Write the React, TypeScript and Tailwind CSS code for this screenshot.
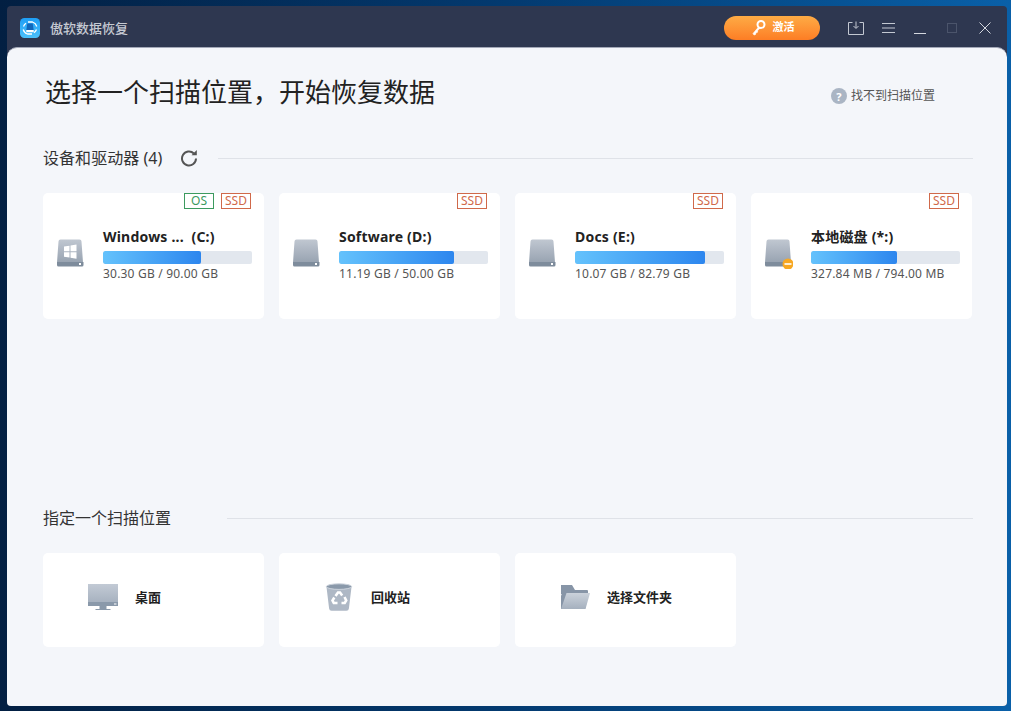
const FONT = '"Noto Sans","Noto Sans CJK SC",sans-serif';

function Hdd({ win, minus }: { win?: boolean; minus?: boolean }) {
  const id = win ? "ga" : minus ? "gb" : "gc";
  return (
    <svg width="30" height="32" viewBox="0 0 30 32" className="mb-[5px] shrink-0">
      <defs>
        <linearGradient id={id} x1="0" y1="0" x2="0" y2="1">
          <stop offset="0" stopColor="#c0c7d1" />
          <stop offset="1" stopColor="#98a3b1" />
        </linearGradient>
      </defs>
      <path d="M3.500 4.500a2 2 0 0 1 2-2h19a2 2 0 0 1 2 2l1.500 21H2z" fill={`url(#${id})`} />
      <path d="M2 25h26.500v3a1.500 1.500 0 0 1-1.500 1.500H3.500A1.500 1.500 0 0 1 2 28z" fill="#7e8c9c" />
      {!minus && <rect x="24" y="26" width="2" height="2" fill="#fff" />}
      {win && <path d="M9 9.600l5.500-.8v5.400H9zM15.500 8.600l6-1v6.600h-6zM9 15.200h5.500v5.400L9 19.800zM15.500 15.200h6v6.600l-6-1z" fill="#fff" />}
      {minus && (
        <g>
          <circle cx="25" cy="27" r="5.500" fill="#f7a823" />
          <rect x="21.500" y="26.200" width="7" height="1.600" fill="#fff" />
        </g>
      )}
    </svg>
  );
}

function Badge({ label, green }: { label: string; green?: boolean }) {
  return (
    <span
      className={`flex h-4 w-[30px] items-center justify-center border text-[12px] leading-none ${
        green ? "border-[#3c9a5f] text-[#3c9a5f]" : "border-[#d0694a] text-[#d0694a]"
      }`}
    >
      {label}
    </span>
  );
}

function Drive({
  name,
  size,
  pct,
  os,
  win,
  minus,
}: {
  name: string;
  size: string;
  pct: number;
  os?: boolean;
  win?: boolean;
  minus?: boolean;
}) {
  return (
    <div className="relative flex h-[126px] w-[221px] shrink-0 items-center rounded-[5px] bg-white pb-[2px] pl-[12px]">
      <div className="absolute right-[13px] top-0 flex gap-[7px]">
        {os && <Badge label="OS" green />}
        <Badge label="SSD" />
      </div>
      <Hdd win={win} minus={minus} />
      <div className="ml-[18px] w-[149px]">
        <div className="whitespace-pre text-[14px] font-bold leading-[20px] tracking-[0.2px] text-[#222]">{name}</div>
        <div className="mt-[4px] h-[13px] w-full overflow-hidden rounded-[2px] bg-[#e2e7ee]">
          <div
            className="h-full rounded-[2px] bg-gradient-to-r from-[#64c2fc] to-[#2d86ee]"
            style={{ width: `${pct}%` }}
          />
        </div>
        <div className="mt-[1px] text-[12px] leading-[18px] tracking-[0.2px] text-[#555]">{size}</div>
      </div>
    </div>
  );
}

function Place({ label, icon }: { label: string; icon: React.ReactNode }) {
  return (
    <div className="flex h-[94px] w-[221px] shrink-0 items-center rounded-[5px] bg-white pb-[6px] pl-[44px]">
      <div className="flex w-[32px] justify-center">{icon}</div>
      <span className="ml-[16px] text-[13px] font-bold leading-none text-[#222]">{label}</span>
    </div>
  );
}

function Monitor() {
  return (
    <svg width="32" height="28" viewBox="0 0 32 28">
      <defs>
        <linearGradient id="gm" x1="0" y1="0" x2="0" y2="1">
          <stop offset="0" stopColor="#c2cad5" />
          <stop offset="1" stopColor="#a7b2c0" />
        </linearGradient>
      </defs>
      <rect x="1" y="1" width="30" height="18" fill="url(#gm)" />
      <rect x="1" y="19" width="30" height="4" fill="#8a99aa" />
      <rect x="27" y="20.500" width="2.500" height="1" fill="#fff" />
      <rect x="12.500" y="23" width="7" height="3" fill="#8a99aa" />
      <rect x="8.500" y="26" width="15" height="1" fill="#8a99aa" />
    </svg>
  );
}

function Trash() {
  return (
    <svg width="28" height="30" viewBox="0 0 28 30">
      <path d="M1.500 5h25l-2.600 21.500a2.500 2.500 0 0 1-2.500 2.200H6.600a2.500 2.500 0 0 1-2.500-2.200z" fill="#aeb8c5" />
      <ellipse cx="14" cy="4.600" rx="12.600" ry="2.800" fill="#8a99aa" stroke="#cdd4dd" strokeWidth="1" />
      <g fill="none" stroke="#fff" strokeWidth="2.600">
        <path d="M10.500 14l2.500-3.500h2l2.200 3" />
        <path d="M19.500 15l1.700 3.500-1.500 2.500h-3.200" />
        <path d="M12.500 21H8.800l-1.300-2.500 1.800-3" />
      </g>
    </svg>
  );
}

function Folder() {
  return (
    <svg width="30" height="26" viewBox="0 0 30 26">
      <defs>
        <linearGradient id="gf" x1="0" y1="0" x2="0" y2="1">
          <stop offset="0" stopColor="#cbd2db" />
          <stop offset="1" stopColor="#a5b0be" />
        </linearGradient>
      </defs>
      <path d="M1 1h11l3 5h12a1 1 0 0 1 1 1v3H1z" fill="#8795a7" />
      <path d="M1 25V12l1-3h27l-4 16z" fill="#8795a7" />
      <path d="M6.500 9H30l-4.500 16H1z" fill="url(#gf)" />
    </svg>
  );
}

export default function App() {
  return (
    <div
      className="h-[711px] w-[1011px] overflow-hidden bg-gradient-to-r from-[#021f42] via-[#033a70] to-[#0a60a8] pb-[5px] pl-[7px] pr-[4px] pt-[6px]"
      style={{ fontFamily: FONT }}
    >
      <div className="flex h-[700px] w-[1000px] flex-col overflow-hidden rounded-[4px] bg-[#2e3750]">
        <header className="flex h-[41px] shrink-0 items-center pl-[13px] pt-[2px]">
          <svg width="20" height="20" viewBox="0 0 20 20" className="mt-[1px]">
            <defs>
              <linearGradient id="gl" x1="0" y1="0" x2="0" y2="1">
                <stop offset="0" stopColor="#1e9ef5" />
                <stop offset="1" stopColor="#4cc1fb" />
              </linearGradient>
            </defs>
            <rect width="20" height="20" rx="4.500" fill="url(#gl)" />
            <path d="M3.200 11.500a6.800 6.800 0 0 0 4.300 4.500H12M16.800 8.500A6.800 6.800 0 0 0 12.500 4H8M3.500 8.500a6.800 6.800 0 0 1 2.500-3.200M16.500 11.500a6.800 6.800 0 0 1-2.500 3.200" fill="none" stroke="#fff" strokeWidth="1.300" />
            <path d="M7.300 5.500h5.400l1 6.500H6.300z" fill="#1267bb" />
            <rect x="6.300" y="12" width="7.400" height="2.200" fill="#fff" />
          </svg>
          <span className="ml-[10px] mt-[2px] text-[13px] font-medium leading-none text-[#c6cad3]">傲软数据恢复</span>
          <button className="ml-[596px] flex h-[24px] w-[96px] items-center justify-center rounded-full bg-gradient-to-b from-[#fdab45] to-[#fd7d24] pl-[1px] text-[11px] font-bold text-white">
            <svg width="15" height="17" viewBox="0 0 15 17" className="mr-[7px]">
              <circle cx="10" cy="5.500" r="3.500" fill="none" stroke="#fff" strokeWidth="2" />
              <path d="M7.500 8L2 14.500l1 1.500 1.500-.5.500-1.800 1.500-.4.200-1.700 2.300-2.600" fill="#fff" stroke="#fff" strokeWidth="0.600" />
            </svg>
            激活
          </button>
          <svg width="16" height="14" viewBox="0 0 16 14" fill="none" stroke="#c3c8d2" strokeWidth="1" className="ml-[28px]">
            <path d="M4.500 1.500H.5v12h15v-12h-4" />
            <path d="M8 .5v6.500M5.500 5L8 7.500 10.500 5" />
          </svg>
          <svg width="13" height="12" viewBox="0 0 13 12" stroke="#c3c8d2" strokeWidth="1" className="ml-[18px]">
            <path d="M0 1.500h13M0 6h13M0 10.500h13" />
          </svg>
          <svg width="12" height="12" viewBox="0 0 12 12" stroke="#d5d8df" strokeWidth="1" className="ml-[19px] mt-[2px]">
            <path d="M0 10.500h12" />
          </svg>
          <svg width="10" height="10" viewBox="0 0 10 10" fill="none" stroke="#4b546b" strokeWidth="1" className="ml-[21px]">
            <rect x=".5" y=".5" width="9" height="9" />
          </svg>
          <svg width="12" height="12" viewBox="0 0 12 12" stroke="#d5d8df" strokeWidth="1" className="ml-[22px]">
            <path d="M.5.500l11 11M11.500.500l-11 11" />
          </svg>
        </header>

        <main className="flex-1 rounded-t-[10px] border-t border-[#a3a8b8] bg-[#f4f6fa] pl-[36px] pr-[35px]">
          <div className="flex h-[87px] items-start justify-between">
            <h1 className="ml-[2px] mt-[26px] text-[26px] font-normal leading-[36px] text-[#222]">
              {"选择一个扫描位置\uFF0C开始恢复数据"}
            </h1>
            <div className="mr-[37px] mt-[39px] flex items-center gap-[4px] text-[12px] leading-[18px] text-[#555]">
              <span className="flex h-4 w-4 items-center justify-center rounded-full bg-[#aab5c4] text-[11px] font-bold leading-none text-white">?</span>
              找不到扫描位置
            </div>
          </div>

          <div className="mt-[11px] flex h-[24px] items-center">
            <span className="whitespace-pre text-[16px] leading-none tracking-[0.05px] text-[#333]">设备和驱动器 (4)</span>
            <svg width="18" height="18" viewBox="0 0 18 18" fill="none" stroke="#555" strokeWidth="2" className="ml-[18px]">
              <path d="M16 9.500a7 7 0 1 1-2.100-5" />
              <path d="M16.800 1v5.300h-5.300z" fill="#555" stroke="none" />
            </svg>
            <div className="ml-[20px] mr-[-1px] h-px flex-1 bg-[#dfe2e8]" />
          </div>

          <div className="mt-[23px] flex gap-[15px]">
            <Drive name="Windows ...  (C:)" size="30.30 GB / 90.00 GB" pct={66} os win />
            <Drive name="Software (D:)" size="11.19 GB / 50.00 GB" pct={77} />
            <Drive name="Docs (E:)" size="10.07 GB / 82.79 GB" pct={87.5} />
            <Drive name="本地磁盘 (*:)" size="327.84 MB / 794.00 MB" pct={58} minus />
          </div>

          <div className="mt-[187px] flex h-[24px] items-center">
            <span className="text-[16px] leading-none text-[#333]">指定一个扫描位置</span>
            <div className="ml-[56px] mr-[-1px] h-px flex-1 bg-[#dfe2e8]" />
          </div>

          <div className="mt-[23px] flex gap-[15px]">
            <Place label="桌面" icon={<Monitor />} />
            <Place label="回收站" icon={<Trash />} />
            <Place label="选择文件夹" icon={<Folder />} />
          </div>
        </main>
      </div>
    </div>
  );
}
